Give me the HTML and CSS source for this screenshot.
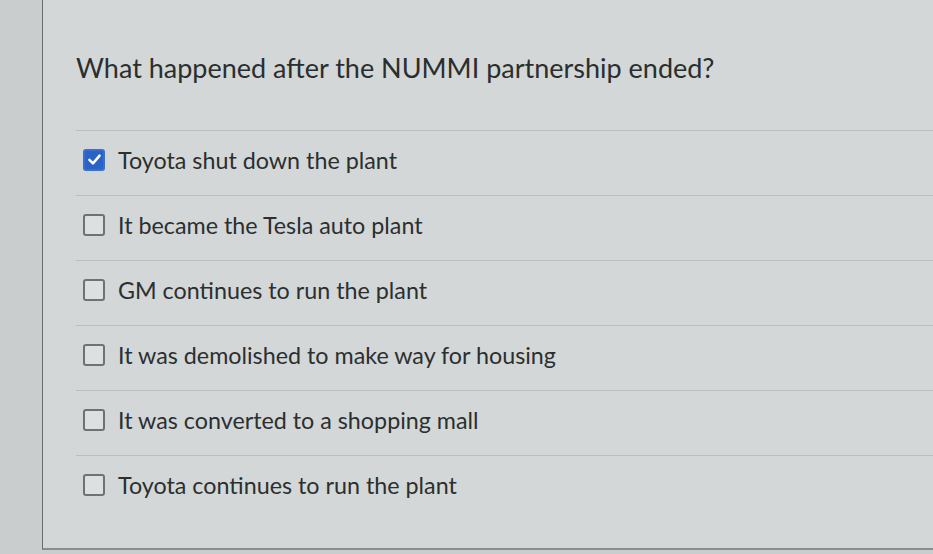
FILE: index.html
```html
<!DOCTYPE html>
<html>
<head>
<meta charset="utf-8">
<link rel="stylesheet" href="styles.css">
</head>
<body>
<div class="panel">
  <h1 class="question">What happened after the NUMMI partnership ended?</h1>
  <ul class="options">
    <li class="option">
      <span class="box checked"><svg viewBox="0 0 20 20" width="17" height="17"><path d="M4 10.5 L8.2 14.5 L16 5.5" fill="none" stroke="#fff" stroke-width="3" stroke-linecap="round" stroke-linejoin="round"/></svg></span>
      <span class="label">Toyota shut down the plant</span>
    </li>
    <li class="option"><span class="box"></span><span class="label">It became the Tesla auto plant</span></li>
    <li class="option"><span class="box"></span><span class="label">GM continues to run the plant</span></li>
    <li class="option"><span class="box"></span><span class="label">It was demolished to make way for housing</span></li>
    <li class="option"><span class="box"></span><span class="label">It was converted to a shopping mall</span></li>
    <li class="option"><span class="box"></span><span class="label">Toyota continues to run the plant</span></li>
  </ul>
</div>
</body>
</html>
```

FILE: styles.css
```css
html, body {
  margin: 0;
  padding: 0;
  height: 554px;
  overflow: hidden;
  background: #c9cdcd;
  font-family: Lato, "Liberation Sans", sans-serif;
  color: #2e3232;
}

.panel {
  margin-left: 42px;
  height: 550px;
  box-sizing: border-box;
  background: #d3d7d7;
  border-left: 1px solid #6a6d6d;
  border-bottom: 2px solid #8a8d8d;
  padding: 48px 0 0 33px;
}

.question {
  margin: 0;
  font-size: 27px;
  font-weight: 400;
  line-height: 40px;
  color: #2a2e2e;
}

.options {
  list-style: none;
  margin: 42px 0 0 0;
  padding: 0;
}

.option {
  height: 65px;
  box-sizing: border-box;
  border-top: 1px solid #babebe;
  display: flex;
  align-items: center;
  padding: 0 0 7px 7px;
  gap: 13px;
}

.box {
  width: 18px;
  height: 18px;
  border: 2px solid #6e7272;
  border-radius: 3px;
  background: #dde0e0;
  display: flex;
  align-items: center;
  justify-content: center;
  flex: none;
}

.box.checked {
  background: #2a62c6;
  border-color: #3a6fd0;
}

.label {
  font-size: 23.3px;
  line-height: 28px;
  color: #2b2f2f;
}
```
